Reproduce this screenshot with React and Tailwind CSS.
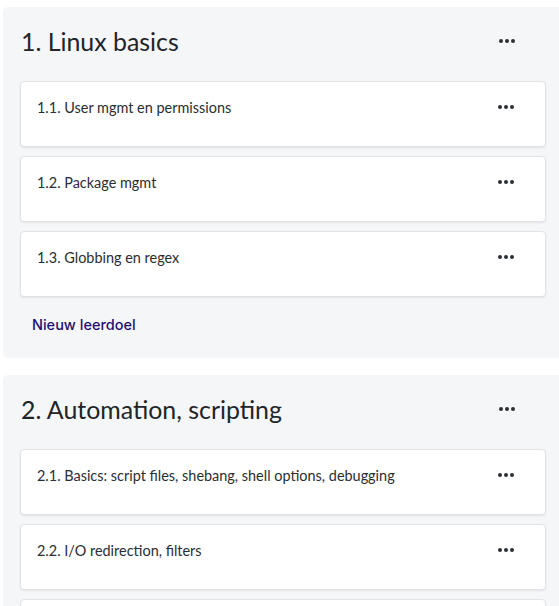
import React from "react";

const sections = [
  {
    title: "1. Linux basics",
    items: ["1.1. User mgmt en permissions", "1.2. Package mgmt", "1.3. Globbing en regex"],
    more: false,
  },
  {
    title: "2. Automation, scripting",
    items: ["2.1. Basics: script files, shebang, shell options, debugging", "2.2. I/O redirection, filters"],
    more: true,
  },
];

const Dots = () => (
  <svg width="16" height="4" viewBox="0 0 16 4" className="block text-[#2b2f33]">
    <circle cx="2" cy="2" r="2" fill="currentColor" />
    <circle cx="8" cy="2" r="2" fill="currentColor" />
    <circle cx="14" cy="2" r="2" fill="currentColor" />
  </svg>
);

const Card = ({ label }) => (
  <div className="h-[66px] bg-white border border-[#e1e3e7] rounded-[4px] shadow-[0_1px_2px_rgba(0,0,0,0.08)] flex items-start justify-between pl-[16px] pr-[31px] pt-[16px]">
    <span className="text-[14.45px] leading-[20px] text-[#2a2e33]">{label}</span>
    <div className="pt-[7px]">
      <Dots />
    </div>
  </div>
);

const Section = ({ section }) => (
  <div className="w-[560px] ml-[3px] rounded-[5px] bg-[#f5f6f8] pt-[17px] pb-[13px] px-[17px]">
    <div className="flex items-center justify-between h-[34px] pl-[1px] pr-[31px]">
      <h2 className="text-[24.9px] leading-[34px] text-[#212529]">{section.title}</h2>
      <Dots />
    </div>
    <div className="mt-[23px] flex flex-col gap-[9px]">
      {section.items.map((item) => (
        <Card key={item} label={item} />
      ))}
      {section.more && <div className="h-[66px] bg-white border border-[#e1e3e7] rounded-[4px]" />}
    </div>
    <div className="pl-[12px] pt-[15px] pb-[9px]">
      <span className="text-[14.5px] leading-[20px] font-medium text-[#1e0e72]" style={{ fontFamily: "Inter, sans-serif" }}>
        Nieuw leerdoel
      </span>
    </div>
  </div>
);

export default function App() {
  return (
    <div className="w-[559px] h-[606px] overflow-hidden bg-white pt-[7px] flex flex-col gap-[17px]" style={{ fontFamily: "Lato, 'Open Sans', sans-serif" }}>
      {sections.map((s) => (
        <Section key={s.title} section={s} />
      ))}
    </div>
  );
}
